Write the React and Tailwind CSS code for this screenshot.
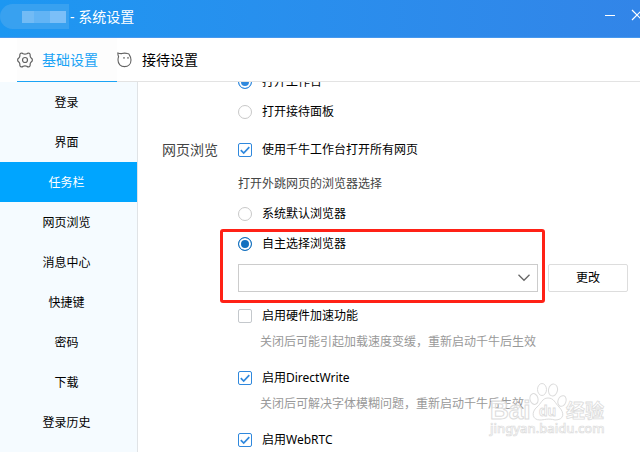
import { useState } from "react";

const SECTIONS = ["登录", "界面", "任务栏", "网页浏览", "消息中心", "快捷键", "密码", "下载", "登录历史"];

function GearIcon() {
  return (
    <svg viewBox="0 0 16 16" className="size-4 shrink-0" fill="none" stroke="#626262" strokeWidth="1.2" strokeLinejoin="round" aria-hidden="true">
      <path d="M6.2 1.7 Q8 2.5 9.8 1.7 C11.4 0.2 13.6 1.6 13.1 3.6 Q13.2 5.1 14.2 6 C15.8 7 15.8 9 14.2 10 Q13.2 10.9 13.1 12.4 C13.6 14.4 11.4 15.8 9.8 14.3 Q8 13.5 6.2 14.3 C4.6 15.8 2.4 14.4 2.9 12.4 Q2.8 10.9 1.8 10 C0.2 9 0.2 7 1.8 6 Q2.8 5.1 2.9 3.6 C2.4 1.6 4.6 0.2 6.2 1.7 Z" />
      <circle cx="8" cy="8" r="2.5" />
    </svg>
  );
}

function MascotIcon() {
  return (
    <svg viewBox="0 0 16 16" className="size-4 shrink-0" fill="none" stroke="#626262" strokeWidth="1.1" aria-hidden="true">
      <path d="M0.8 0.9 Q3 1.8 4.8 1.6 Q7.6 0.6 10.4 1.6 L12 2.1 Q12.4 3 12.6 3.4 Q14 5.2 14 8 C14 12 11.2 14.6 7.5 14.6 C3.7 14.6 1 12 1 8 Q1 6 1.6 4.8 Q0.8 2.6 0.8 0.9 Z" strokeLinejoin="round" />
      <path d="M7 5 V6.8 M11 5 V6.8" strokeWidth="1.2" />
    </svg>
  );
}

function Tab({ icon, label, active }) {
  return (
    <button
      type="button"
      role="tab"
      aria-selected={active}
      className={
        "flex w-[100px] items-center gap-[9px] border-b text-sm " +
        (active ? "border-[#1aa3f5] bg-[#fdfdfd] text-[#1aa3f5]" : "border-[#e3e3e3] text-black")
      }
    >
      {icon}
      {label}
    </button>
  );
}

function Radio({ name, label, checked, onChange, tone }) {
  return (
    <label className="flex h-[30px] items-center gap-[10px]">
      <input
        type="radio"
        name={name}
        checked={checked}
        onChange={onChange}
        className={
          "size-[14px] shrink-0 appearance-none rounded-full border border-[#c8c8c8] bg-white checked:shadow-[inset_0_0_0_2px_white] " +
          (tone === "deep" ? "checked:border-[#1270bf] checked:bg-[#1270bf]" : "checked:border-[#2f88dd] checked:bg-[#2f88dd]")
        }
      />
      {label}
    </label>
  );
}

function Check({ label, defaultChecked }) {
  return (
    <label className="flex h-[30px] items-center gap-[10px]">
      <span className="relative size-[14px] shrink-0">
        <input
          type="checkbox"
          defaultChecked={defaultChecked}
          className="peer block size-[14px] appearance-none rounded-[2px] border border-[#c4c8cc] bg-white checked:border-[#2f88dd]"
        />
        <svg viewBox="0 0 14 14" className="pointer-events-none absolute inset-0 hidden size-[14px] peer-checked:block" fill="none" stroke="#2f88dd" strokeWidth="1.7" aria-hidden="true">
          <path d="M2.8 7.2 L5.7 10 L11.3 4.2" />
        </svg>
      </span>
      {label}
    </label>
  );
}

function Hint({ children }) {
  return <p className="h-[22px] pl-[22px] leading-[22px] text-[#999999]">{children}</p>;
}

function Watermark() {
  return (
    <svg viewBox="0 0 120 58" className="pointer-events-none absolute right-[32px] bottom-[13px] h-[58px] w-[120px]" fill="#ffffff" fillOpacity="0.75" stroke="#dcdcdc" strokeWidth="1" aria-hidden="true">
      <g fontFamily="'Liberation Sans', 'Noto Sans CJK SC', sans-serif" fontWeight="bold">
        <text x="2" y="38" fontSize="26">Bai</text>
        <ellipse cx="46" cy="18" rx="4" ry="5.5" transform="rotate(-15 46 18)" />
        <ellipse cx="54" cy="8.5" rx="4.5" ry="6" />
        <ellipse cx="65" cy="9" rx="4.5" ry="6" transform="rotate(12 65 9)" />
        <ellipse cx="74" cy="20" rx="4" ry="5.5" transform="rotate(20 74 20)" />
        <path d="M60 17 C54 17 53 23 49 26 C43 31 44 39 52 39 C56 39 60 37 67 39 C76 39 77 32 71 26 C67 22 66 17 60 17 Z" />
        <text x="51" y="35" fontSize="14" strokeWidth="0.8">du</text>
        <text x="78" y="37" fontSize="19" strokeWidth="0.8">经验</text>
      </g>
      <text x="2" y="52" fontFamily="'Noto Sans', sans-serif" fontSize="13" fontWeight="500" strokeWidth="0.7">jingyan.baidu.com</text>
    </svg>
  );
}

export default function App() {
  const [section, setSection] = useState("任务栏");
  const [panel, setPanel] = useState("workbench");
  const [browser, setBrowser] = useState("custom");

  return (
    <div className="relative flex h-screen flex-col overflow-hidden bg-white font-['Noto_Sans','Noto_Sans_CJK_SC',sans-serif] text-xs text-black">
      <header className="flex h-[38px] shrink-0 items-center justify-between border-b border-[#4798ee] bg-linear-to-r from-[#1c97f2] to-[#3285e8] text-white">
        <div className="flex items-center gap-px pb-1">
          <div className="flex h-[25px] w-[69px] items-center rounded-r-xl rounded-l-full bg-[#38a1f0] pl-[22px]" aria-hidden="true">
            <span className="h-3 w-3 bg-[#72bbf5]" />
            <span className="h-3 w-4 bg-[#62b4f5]" />
            <span className="h-3 w-4 bg-[#7bbff8]" />
          </div>
          <h1 className="text-sm">- 系统设置</h1>
        </div>
        <div className="-mr-[3px] flex items-center gap-4 pb-[7px]">
          <button type="button" aria-label="最小化" className="flex h-3 w-[10px] items-center">
            <span className="h-px w-full bg-white" />
          </button>
          <button type="button" aria-label="关闭">
            <svg viewBox="0 0 12 12" className="size-3" stroke="white" strokeWidth="1.2" aria-hidden="true">
              <path d="M1 1 L11 11 M11 1 L1 11" />
            </svg>
          </button>
        </div>
      </header>

      <div className="flex h-11 shrink-0" role="tablist">
        <span className="w-[17px]" />
        <Tab icon={<GearIcon />} label="基础设置" active />
        <Tab icon={<MascotIcon />} label="接待设置" active={false} />
        <span className="flex-1 border-b border-[#e3e3e3]" />
      </div>

      <div className="flex min-h-0 flex-1">
        <nav className="w-[138px] shrink-0 border-r border-[#e0e3e6] bg-[#f5fbff]">
          {SECTIONS.map((name) => (
            <button
              key={name}
              type="button"
              onClick={() => setSection(name)}
              className={"block h-10 w-full pt-0.5 pr-1 text-center " + (name === section ? "bg-[#00a5ff] text-white" : "text-black")}
            >
              {name}
            </button>
          ))}
        </nav>

        <main className="min-w-0 flex-1 overflow-hidden pr-3 pl-6">
          <div className="-mt-[15px] pl-[76px]">
            <Radio name="panel" label="打开工作台" checked={panel === "workbench"} onChange={() => setPanel("workbench")} />
            <Radio name="panel" label="打开接待面板" checked={panel === "reception"} onChange={() => setPanel("reception")} />
          </div>

          <section className="mt-2 flex">
            <h2 className="w-[76px] shrink-0 text-sm leading-[30px] text-[#444444]">网页浏览</h2>
            <div className="min-w-0 flex-1">
              <Check label="使用千牛工作台打开所有网页" defaultChecked />
              <p className="mt-1 leading-[30px] text-[#444444]">打开外跳网页的浏览器选择</p>
              <Radio name="browser" label="系统默认浏览器" checked={browser === "system"} onChange={() => setBrowser("system")} />
              <Radio name="browser" label="自主选择浏览器" tone="deep" checked={browser === "custom"} onChange={() => setBrowser("custom")} />

              <div className="mt-[5px] flex gap-[10px]">
                <div className="relative min-w-0 flex-1">
                  <select aria-label="浏览器" className="block h-7 w-full appearance-none border border-[#cccccc] bg-white px-2">
                    <option value="" />
                  </select>
                  <svg viewBox="0 0 12 8" className="pointer-events-none absolute top-[10px] right-2 h-2 w-3" fill="none" stroke="#666666" strokeWidth="1.3" aria-hidden="true">
                    <path d="M0.5 0.8 L6 6.3 L11.5 0.8" />
                  </svg>
                  <span className="pointer-events-none absolute -top-[35px] -right-[7px] -bottom-[11px] -left-[18px] rounded-[3px] border-3 border-[#ff2116]" />
                </div>
                <button type="button" className="h-7 w-20 rounded-[2px] border border-[#dddddd] bg-white">更改</button>
              </div>

              <div className="mt-[9px]">
                <Check label="启用硬件加速功能" />
                <Hint>关闭后可能引起加载速度变缓，重新启动千牛后生效</Hint>
              </div>
              <div className="mt-[10px]">
                <Check label="启用DirectWrite" defaultChecked />
                <Hint>关闭后可解决字体模糊问题，重新启动千牛后生效</Hint>
              </div>
              <div className="mt-[10px]">
                <Check label="启用WebRTC" defaultChecked />
              </div>
            </div>
          </section>
        </main>
      </div>

      <Watermark />
    </div>
  );
}
